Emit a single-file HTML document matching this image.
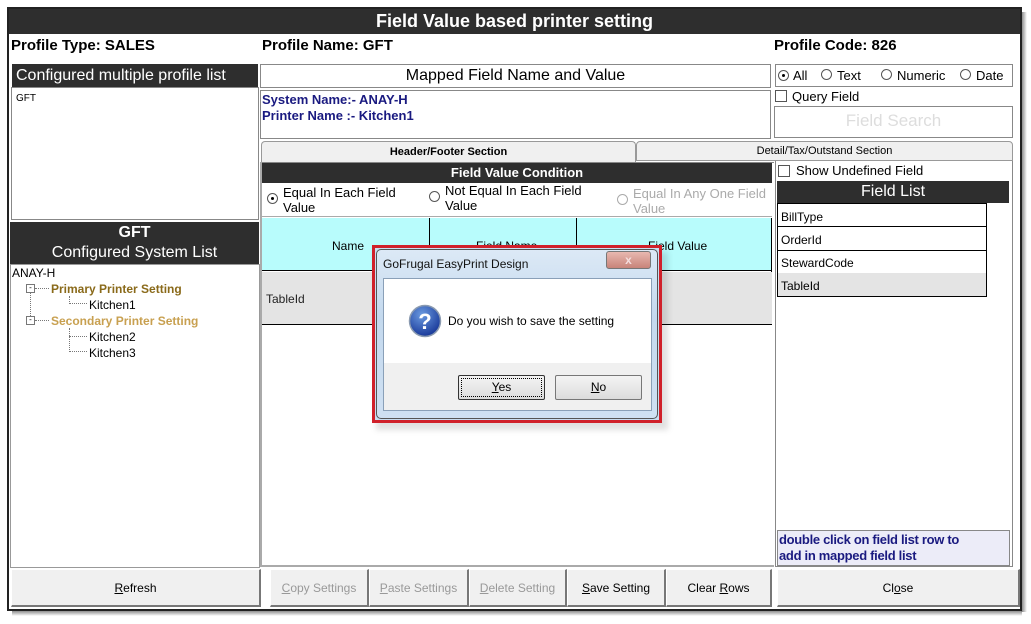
<!DOCTYPE html>
<html><head><meta charset="utf-8"><style>
*{box-sizing:border-box;margin:0;padding:0}
body{width:1031px;height:624px;background:#fff;position:relative;overflow:hidden;font-family:"Liberation Sans",sans-serif;color:#000}
.a{position:absolute}
.dark{background:#2e2e2e;color:#fff}
.bx{border:1px solid #888;background:#fff}
.btn{position:absolute;background:#f0f0f0;border:1px solid #fff;border-right:2px solid #777;border-bottom:2px solid #777;font-size:12px;display:flex;align-items:center;justify-content:center;font-family:"Liberation Sans Narrow","Liberation Sans",sans-serif}
.dis{color:#999}
.rad{position:absolute;display:block;width:11px;height:11px;border:1px solid #555;border-radius:50%;background:#fff}
.rad.on::after{content:"";position:absolute;left:3px;top:3px;width:3px;height:3px;border-radius:50%;background:#000}
.chk{display:inline-block;width:12px;height:12px;border:1px solid #555;background:#fff;vertical-align:middle}
.row{position:absolute;left:777px;width:210px;height:24px;border:1px solid #000;border-top:none;font-size:12px;padding:6px 3px;font-family:"Liberation Sans Narrow","Liberation Sans",sans-serif}
.tree{font-size:12px;position:absolute}
u{text-decoration:underline}
</style></head><body>
<div class="a" style="left:12px;top:610px;width:1010px;height:6px;background:linear-gradient(#777,#fff)"></div>
<div class="a" style="left:1021px;top:12px;width:6px;height:600px;background:linear-gradient(90deg,#777,#fff)"></div>
<div class="a" style="left:7px;top:7px;width:1015px;height:604px;border:2px solid #222;background:#fff"></div>
<div class="a dark" style="left:9px;top:9px;width:1011px;height:25px;font-size:18px;font-weight:bold;text-align:center;line-height:25px">Field Value based printer setting</div>

<div class="a" style="left:11px;top:37px;font-size:15px;font-weight:bold">Profile Type: SALES</div>
<div class="a" style="left:262px;top:37px;font-size:15px;font-weight:bold">Profile Name: GFT</div>
<div class="a" style="left:774px;top:37px;font-size:15px;font-weight:bold">Profile Code: 826</div>

<div class="a dark" style="left:12px;top:64px;width:246px;height:23px;font-size:16px;line-height:23px;padding-left:4px">Configured multiple profile list</div>
<div class="a bx" style="left:11px;top:87px;width:248px;height:133px;font-size:10px;padding:5px 4px">GFT</div>
<div class="a dark" style="left:10px;top:222px;width:249px;height:42px;font-size:16px;text-align:center;line-height:20px;padding-top:1px"><b>GFT</b><br>Configured System List</div>
<div class="a bx" style="left:10px;top:264px;width:250px;height:304px;border-color:#999"></div>
<div class="tree" style="left:12px;top:266px">ANAY-H</div>
<div class="a" style="left:30px;top:286px;width:0;height:36px;border-left:1px dotted #777"></div>
<div class="a" style="left:26px;top:284px;width:9px;height:9px;border:1px solid #777;background:#fff;font-size:8px;line-height:6px;text-align:center">-</div>
<div class="a" style="left:35px;top:288px;width:14px;border-top:1px dotted #777"></div>
<div class="tree" style="left:51px;top:282px;font-weight:bold;color:#8a6a1a">Primary Printer Setting</div>
<div class="a" style="left:69px;top:296px;width:18px;height:8px;border-left:1px dotted #777;border-bottom:1px dotted #777"></div>
<div class="tree" style="left:89px;top:298px">Kitchen1</div>
<div class="a" style="left:26px;top:316px;width:9px;height:9px;border:1px solid #777;background:#fff;font-size:8px;line-height:6px;text-align:center">-</div>
<div class="a" style="left:35px;top:320px;width:14px;border-top:1px dotted #777"></div>
<div class="tree" style="left:51px;top:314px;font-weight:bold;color:#c8a050">Secondary Printer Setting</div>
<div class="a" style="left:69px;top:328px;width:18px;height:24px;border-left:1px dotted #777;border-bottom:1px dotted #777"></div>
<div class="a" style="left:69px;top:336px;width:18px;border-top:1px dotted #777"></div>
<div class="tree" style="left:89px;top:330px">Kitchen2</div>
<div class="tree" style="left:89px;top:346px">Kitchen3</div>

<div class="a bx" style="left:260px;top:64px;width:511px;height:24px;font-size:16px;text-align:center;line-height:22px">Mapped Field Name and Value</div>
<div class="a bx" style="left:260px;top:90px;width:511px;height:49px;font-size:13px;font-weight:bold;color:#1a1a80;line-height:16px;padding:1px 1px">System Name:- ANAY-H<br>Printer Name :- Kitchen1</div>
<div class="a" style="left:261px;top:141px;width:375px;height:22px;background:#f0f0f0;border:1px solid #999;border-bottom:none;border-radius:4px 4px 0 0;font-size:11px;font-weight:bold;text-align:center;line-height:21px">Header/Footer Section</div>
<div class="a" style="left:636px;top:141px;width:377px;height:20px;background:#f0f0f0;border:1px solid #999;border-radius:4px 4px 0 0;font-size:11px;text-align:center;line-height:19px">Detail/Tax/Outstand Section</div>
<div class="a" style="left:260px;top:162px;width:514px;height:405px;border:1px solid #888;border-right:none;background:#fff"></div>
<div class="a" style="left:260px;top:162px;width:514px;height:405px;border:1px solid #aaa;border-width:0 0 2px 2px"></div>
<div class="a dark" style="left:262px;top:163px;width:510px;height:20px;font-size:13px;font-weight:bold;text-align:center;line-height:20px">Field Value Condition</div>
<div class="a" style="left:262px;top:183px;width:510px;height:34px;border-bottom:1px solid #aaa;font-size:13px;line-height:15px">
 <span class="rad on" style="left:5px;top:10px"></span><span class="a" style="left:21px;top:2px">Equal In Each Field<br>Value</span>
 <span class="rad" style="left:167px;top:8px"></span><span class="a" style="left:183px;top:0px">Not Equal In Each Field<br>Value</span>
 <span class="rad" style="left:355px;top:11px;border-color:#aaa"></span><span class="a" style="left:371px;top:3px;color:#aaa">Equal In Any One Field<br>Value</span>
</div>
<div class="a" style="left:262px;top:218px;width:510px;height:53px;background:#b8fcfc;border-bottom:1px solid #000"></div>
<div class="a" style="left:429px;top:218px;height:53px;border-left:1px solid #000"></div>
<div class="a" style="left:576px;top:218px;height:53px;border-left:1px solid #000"></div>
<div class="a" style="left:771px;top:218px;height:107px;border-left:1px solid #000"></div>
<div class="a" style="left:332px;top:239px;font-size:12px">Name</div>
<div class="a" style="left:476px;top:239px;font-size:12px">Field Name</div>
<div class="a" style="left:648px;top:239px;font-size:12px">Field Value</div>
<div class="a" style="left:262px;top:272px;width:510px;height:53px;background:#e4e4e4;border-bottom:1px solid #000"></div>
<div class="a" style="left:266px;top:292px;font-size:12px;color:#222">TableId</div>

<div class="a bx" style="left:775px;top:64px;width:238px;height:23px;font-size:13px;line-height:21px">
 <span class="rad on" style="left:2px;top:5px"></span><span class="a" style="left:17px">All</span>
 <span class="rad" style="left:45px;top:4px"></span><span class="a" style="left:61px">Text</span>
 <span class="rad" style="left:105px;top:4px"></span><span class="a" style="left:121px">Numeric</span>
 <span class="rad" style="left:184px;top:4px"></span><span class="a" style="left:200px">Date</span>
</div>
<span class="chk a" style="left:775px;top:90px"></span><span class="a" style="left:792px;top:89px;font-size:13px">Query Field</span>
<div class="a bx" style="left:774px;top:106px;width:239px;height:32px;font-size:17px;color:#ddd;text-align:center;line-height:28px">Field Search</div>
<div class="a" style="left:775px;top:161px;width:238px;height:406px;border:1px solid #888;border-top:none;background:#fff"></div>
<span class="chk a" style="left:778px;top:165px"></span><span class="a" style="left:796px;top:163px;font-size:13px">Show Undefined Field</span>
<div class="a dark" style="left:777px;top:181px;width:232px;height:22px;font-size:16px;text-align:center;line-height:21px">Field List</div>
<div class="row" style="top:203px;border-top:1px solid #000">BillType</div>
<div class="row" style="top:227px">OrderId</div>
<div class="row" style="top:250px">StewardCode</div>
<div class="row" style="top:273px;background:#e4e4e4">TableId</div>
<div class="a" style="left:777px;top:530px;width:233px;height:36px;border:1px solid #888;background:#ececf8;font-size:13px;font-weight:bold;color:#1a1a80;line-height:16px;padding:1px 1px;letter-spacing:-0.3px;white-space:nowrap">double click on field list row to<br>add in mapped field list</div>

<div class="btn" style="left:11px;top:569px;width:250px;height:38px"><span><u>R</u>efresh</span></div>
<div class="btn dis" style="left:270px;top:569px;width:99px;height:38px"><span><u>C</u>opy Settings</span></div>
<div class="btn dis" style="left:369px;top:569px;width:100px;height:38px"><span><u>P</u>aste Settings</span></div>
<div class="btn dis" style="left:469px;top:569px;width:98px;height:38px"><span><u>D</u>elete Setting</span></div>
<div class="btn" style="left:567px;top:569px;width:99px;height:38px"><span><u>S</u>ave Setting</span></div>
<div class="btn" style="left:666px;top:569px;width:106px;height:38px"><span>Clear <u>R</u>ows</span></div>
<div class="btn" style="left:777px;top:569px;width:243px;height:38px"><span>Cl<u>o</u>se</span></div>

<div class="a" style="left:376px;top:252px;width:292px;height:178px;background:rgba(0,0,0,.12);filter:blur(3px)"></div>
<div class="a" style="left:372px;top:245px;width:290px;height:178px;border:3px solid #d0202a;background:#c9ddf0"></div>
<div class="a" style="left:376px;top:249px;width:282px;height:170px;border:1px solid #555;border-radius:5px;background:linear-gradient(#dce9f6,#c4d9ee 40%,#cfe0f2)"></div>
<div class="a" style="left:383px;top:257px;font-size:12px;color:#111">GoFrugal EasyPrint Design</div>
<div class="a" style="left:606px;top:251px;width:45px;height:18px;border:1px solid #777;border-radius:3px;background:linear-gradient(#e8b8b0,#c8847a);color:#f5dede;font-size:12px;font-weight:bold;text-align:center;line-height:16px">x</div>
<div class="a" style="left:383px;top:278px;width:269px;height:133px;border:1px solid #8aa0b8;background:#f0f0f0"></div>
<div class="a" style="left:384px;top:279px;width:267px;height:84px;background:#fff"></div>
<svg class="a" style="left:408px;top:304px" width="34" height="34" viewBox="0 0 34 34"><defs><radialGradient id="g" cx="40%" cy="30%" r="70%"><stop offset="0" stop-color="#6a9ae0"/><stop offset="1" stop-color="#1a3a9a"/></radialGradient></defs><circle cx="17" cy="17" r="15.5" fill="url(#g)" stroke="#8a9ab0" stroke-width="1.5"/><text x="17" y="25" font-size="22" font-weight="bold" fill="#fff" text-anchor="middle" font-family="Liberation Sans">?</text></svg>
<div class="a" style="left:448px;top:314px;font-size:12px">Do you wish to save the setting</div>
<div class="a" style="left:458px;top:375px;width:87px;height:25px;border:1px solid #333;border-radius:2px;background:linear-gradient(#f4f4f4,#dcdcdc);font-size:12px;text-align:center;line-height:23px"><div style="position:absolute;inset:2px;border:1px dotted #000"></div><u>Y</u>es</div>
<div class="a" style="left:555px;top:375px;width:87px;height:25px;border:1px solid #777;border-radius:2px;background:linear-gradient(#f4f4f4,#dcdcdc);font-size:12px;text-align:center;line-height:23px"><u>N</u>o</div>
</body></html>
